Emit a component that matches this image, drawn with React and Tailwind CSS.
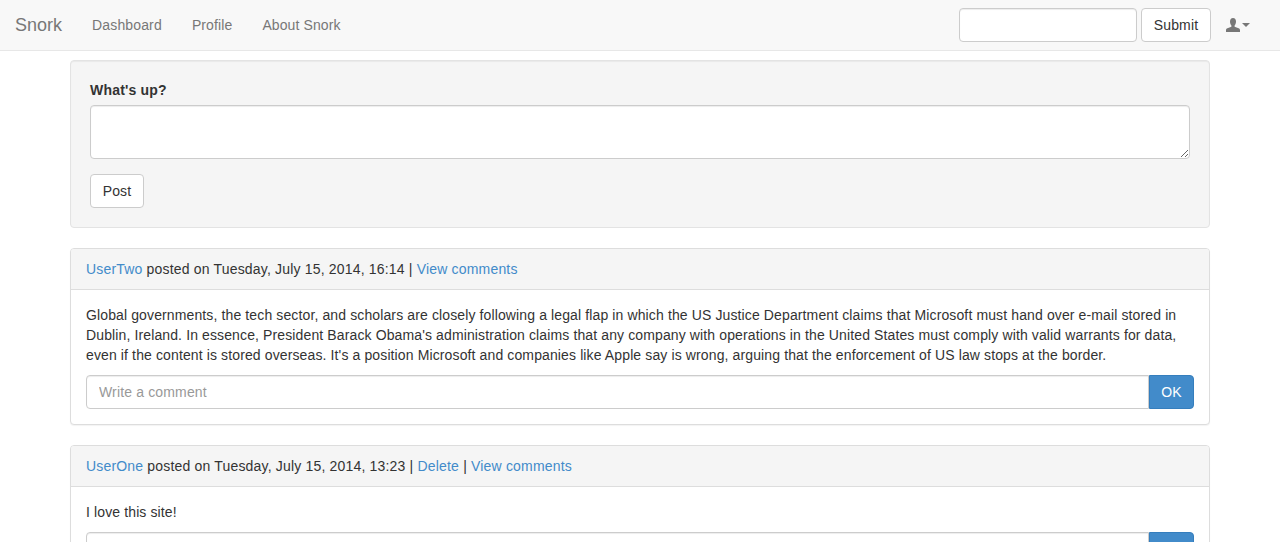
const posts = [
  {
    id: 2,
    author: "UserTwo",
    date: "Tuesday, July 15, 2014, 16:14",
    canDelete: false,
    body: "Global governments, the tech sector, and scholars are closely following a legal flap in which the US Justice Department claims that Microsoft must hand over e-mail stored in Dublin, Ireland. In essence, President Barack Obama's administration claims that any company with operations in the United States must comply with valid warrants for data, even if the content is stored overseas. It's a position Microsoft and companies like Apple say is wrong, arguing that the enforcement of US law stops at the border.",
  },
  {
    id: 1,
    author: "UserOne",
    date: "Tuesday, July 15, 2014, 13:23",
    canDelete: true,
    body: "I love this site!",
  },
];

function UserIcon() {
  return (
    <svg viewBox="0 0 14 14" className="w-[14px] h-[14px] fill-[#777]">
      <path d="M7 0C5 0 4 1.6 4 3.6C4 5.2 4.6 6.7 5.4 7.5V8.7L1.4 10.3C0.5 10.7 0 11.3 0 12.2V14H14V12.2C14 11.3 13.5 10.7 12.6 10.3L8.6 8.7V7.5C9.4 6.7 10 5.2 10 3.6C10 1.6 9 0 7 0Z" />
    </svg>
  );
}

function Navbar() {
  return (
    <nav className="h-[51px] bg-[#f8f8f8] border-b border-[#e7e7e7] flex items-center text-[#777]">
      <a href="#" className="pl-[15px] pr-[15px] text-[18px] leading-5">Snork</a>
      <a href="#" className="px-[15px] leading-5 tracking-[0.15px]">Dashboard</a>
      <a href="#" className="px-[15px] leading-5 tracking-[0.12px]">Profile</a>
      <a href="#" className="px-[15px] leading-5 tracking-[0.1px]">About Snork</a>
      <div className="ml-auto flex items-center gap-1">
        <input className="w-[178px] h-[34px] bg-white border border-[#ccc] rounded px-3 shadow-[inset_0_1px_1px_rgba(0,0,0,0.075)]" />
        <button className="w-[70px] h-[34px] bg-white border border-[#ccc] rounded text-[#333] tracking-[0.15px]">Submit</button>
      </div>
      <a href="#" className="ml-[15px] mr-[30px] flex items-center">
        <UserIcon />
        <span className="ml-[2px] w-0 h-0 border-x-4 border-x-transparent border-t-4 border-t-[#777]" />
      </a>
    </nav>
  );
}

function PostForm() {
  return (
    <div className="mb-5 p-[19px] bg-[#f5f5f5] border border-[#e3e3e3] rounded shadow-[inset_0_1px_1px_rgba(0,0,0,0.05)]">
      <label className="block mb-[5px] font-bold leading-5 tracking-[0.2px]">What's up?</label>
      <textarea className="block w-full h-[54px] mb-[15px] bg-white border border-[#ccc] rounded px-3 py-1.5 shadow-[inset_0_1px_1px_rgba(0,0,0,0.075)]" />
      <button className="block w-[54px] h-[34px] bg-white border border-[#ccc] rounded text-[#333] tracking-[0.1px]">Post</button>
    </div>
  );
}

function Post({ post }) {
  return (
    <div className="mb-5 bg-white border border-[#ddd] rounded shadow-[0_1px_1px_rgba(0,0,0,0.05)]">
      <div className="px-[15px] py-[10px] bg-[#f5f5f5] border-b border-[#ddd] rounded-t-[3px] leading-5 tracking-[0.18px]">
        <a href="#" className="text-[#428bca]">{post.author}</a> posted on {post.date} |{" "}
        {post.canDelete && (
          <>
            <a href="#" className="text-[#428bca]">Delete</a> |{" "}
          </>
        )}
        <a href="#" className="text-[#428bca]">View comments</a>
      </div>
      <div className="p-[15px]">
        <p className="mb-[10px] leading-5 tracking-[0.122px]">{post.body}</p>
        <div className="flex h-[34px]">
          <input
            placeholder="Write a comment"
            className="flex-1 min-w-0 bg-white border border-[#ccc] rounded-l px-3 tracking-[0.15px] placeholder:text-[#999] shadow-[inset_0_1px_1px_rgba(0,0,0,0.075)]"
          />
          <button className="w-[45px] bg-[#428bca] border border-[#357ebd] rounded-r text-white tracking-[0.15px]">OK</button>
        </div>
      </div>
    </div>
  );
}

export default function App() {
  return (
    <div className="h-screen overflow-hidden bg-white text-[14px] text-[#333] font-['Liberation_Sans',Arial,sans-serif]">
      <Navbar />
      <main className="w-[1170px] mx-auto px-[15px] pt-[9px]">
        <PostForm />
        {posts.map((post) => (
          <Post key={post.id} post={post} />
        ))}
      </main>
    </div>
  );
}
